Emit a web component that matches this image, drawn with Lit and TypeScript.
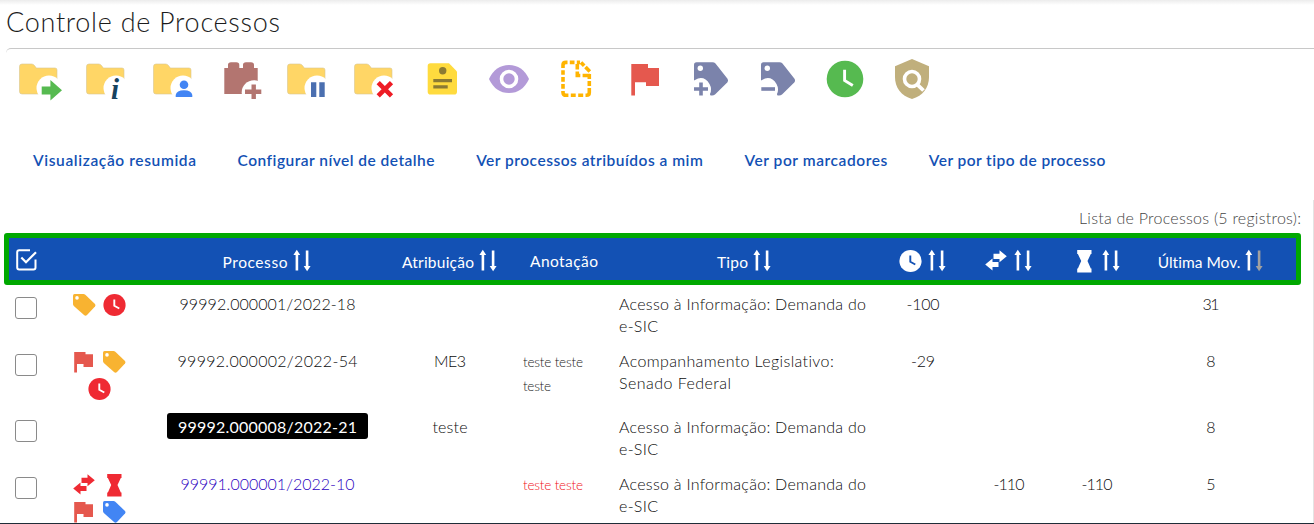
import { LitElement, html, svg, css, nothing } from "lit";
import { customElement } from "lit/decorators.js";
import { styleMap } from "lit/directives/style-map.js";

const FAMILY = '"Lato", "Liberation Sans", sans-serif';
const pen = document.createElement("canvas").getContext("2d")!;

/* Text run tracked so that it occupies the given width. */
const run = (text: string, width: number, size = 16, weight = 300) => {
  pen.font = `${weight} ${size}px ${FAMILY}`;
  const ls = (width - pen.measureText(text).width) / Math.max(1, text.length - 1);
  return html`<span
    class="run"
    style=${styleMap({
      fontSize: `${size}px`,
      fontWeight: `${weight}`,
      letterSpacing: `${ls.toFixed(3)}px`,
      marginRight: `${(-ls).toFixed(3)}px`,
    })}
    >${text}</span
  >`;
};

const folder = svg`
  <path d="M4 9H13.5Q15.5 9 16.5 10.5L18.3 13H37Q39 13 39 15V37Q39 39 37 39H4Q1.5 39 1.5 36.500V11.500Q1.500 9 4 9Z"
    fill="#ffd666" stroke="#d8c690" stroke-width=".6"/>
  <circle cx="31" cy="33" r="12.500" fill="#fff"/>`;
const tagCut = svg`
  <path d="M8.500 7.200H24.500Q26.300 7.200 27.500 8.500L39.500 23.800Q40.700 25.600 39.500 27.200L27 39.500Q25 41 22.200 40.200L22 39Q24.300 34 21.500 29Q17 21.500 10 23.500L6 25.500V10Q6 7.200 8.500 7.200Z" fill="#7b83ab"/>
  <circle cx="12.300" cy="13.300" r="2.700" fill="#fff"/>`;

const tools = [
  svg`${folder}<path d="M23.700 31.600H32.400V25L44 35.300L32.400 45.500V39.600H23.700Z" fill="#56ba50"/>`,
  svg`${folder}<text x="26" y="44" class="info">i</text>`,
  svg`${folder}<circle cx="32" cy="29.700" r="4.300" fill="#4285f4"/><path d="M23.700 42V40Q24.500 35.500 32 35.300Q39.500 35.500 40.300 40V42Z" fill="#4285f4"/>`,
  svg`<path d="M5.300 13H9V10Q9 7.300 12 7.300H17.300Q20.300 7.300 20.300 10V13H24V10Q24 7.300 27 7.300H32Q35 7.300 35 10V13H38.700V39H5.300Z" fill="#b37570"/>
    <circle cx="35" cy="37.500" r="12.300" fill="#fff"/><path d="M26 36.800H42.300M34.700 29.500V44" stroke="#b37570" stroke-width="4.400"/>`,
  svg`${folder}<path d="M25 27.300H30.300V42H25ZM33.300 27.300H38.700V42H33.300Z" fill="#4b6fb0"/>`,
  svg`${folder}<path d="M25.200 27.600L38.500 40.800M38.500 27.600L25.200 40.800" stroke="#ee1c25" stroke-width="4.600"/>`,
  svg`<path d="M10.500 8.300H29L37 16.500V36.700Q37 39.500 34.200 39.500H10.500Q7.700 39.500 7.700 36.700V11Q7.700 8.300 10.500 8.300Z" fill="#ffdb3e"/>
    <circle cx="22.700" cy="15.700" r="3.700" fill="#8b7a33"/><path d="M13.300 25.600H32M13.300 31.800H27.700" stroke="#8b7a33" stroke-width="3.300"/>`,
  svg`<path d="M2 24Q8.500 10 22 10T42 24Q35.500 38 22 38T2 24Z" fill="#b39ad8"/><circle cx="22" cy="24" r="7.500" fill="none" stroke="#fff" stroke-width="3.600"/>`,
  svg`<g fill="none" stroke="#ffb400" stroke-width="3.600">
    <path d="M9 13V10Q9 7.400 12 7.400H13.500M15.800 7.400H20.500M22.800 7.400H26M27 7.500L30.200 10.800M31.500 12L35.800 16.500M35.300 19V24M35.300 26V31M35.300 33V37.500Q35.300 40.300 32.500 40.300H31.500M29.200 40.300H24.200M21.700 40.300H16.800M14.400 40.300H12Q9 40.300 9 37.500V36M9 33.700V29M9 26.700V22M9 19.700V15.300"/>
    <path d="M23.300 9V14.500M23.300 16.500V20.500H26.300M28.600 20.500H36"/></g>`,
  svg`<path d="M10.300 9H27V13H38V31H25V27.300H14V40.500H10.300Z" fill="#e5584e"/>`,
  svg`${tagCut}<path d="M6 34H20M13 27.500V40.600" stroke="#7b83ab" stroke-width="3.600"/>`,
  svg`${tagCut}<path d="M6.300 34H20" stroke="#7b83ab" stroke-width="3.600"/>`,
  svg`<circle cx="23" cy="24" r="18.300" fill="#56ba50"/><path d="M22.600 14.800V25.500L30.800 30.500" fill="none" stroke="#fff" stroke-width="2.900"/>`,
  svg`<path d="M23 4L40 11.300V22C40 32.500 34 41 23 44C12 41 6 32.500 6 22V11.300Z" fill="#c0af7c"/>
    <circle cx="23" cy="24" r="7.500" fill="none" stroke="#fff" stroke-width="3.600"/><path d="M27.500 28.800L34.500 35.500" stroke="#fff" stroke-width="3.800"/>`,
];

const glyphs: Record<string, unknown> = {
  tag: svg`<path d="M2.500 1H11.500Q12.500 1 13.300 1.700L23 11Q24 12.300 23 13.500L15 22Q13.500 23.300 12 22L1.800 13Q1 12.200 1 11V2.500Q1 1 2.500 1Z" fill="currentColor"/><circle cx="5" cy="4.900" r="1.800" fill="#fff"/>`,
  clock: svg`<circle cx="12.500" cy="12" r="11.100" fill="currentColor"/><path class="hand" d="M12.300 6.500V12.800L17.300 15.500" fill="none" stroke-width="1.900"/>`,
  flag: svg`<path d="M2.200 2H13.500V4.200H21V17H11.500V14H5V22.500H2.200Z" fill="currentColor"/>`,
  swap: svg`<path d="M9.500 4.700H15.500V1.300L22.800 7.300L15.500 13.300V10H9.500ZM14.500 13H8.500V9.500L1.200 15.500L8.500 21.500V18H14.500Z" fill="currentColor"/>`,
  hour: svg`<path d="M5.200 1H19.500V5H18.800L15.500 12L18.800 19.500H19.500V23.500H5.200V19.500H5.900L9.200 12L5.900 5H5.200Z" fill="currentColor"/>`,
};
const glyph = (name: string, tone = "") =>
  html`<svg class="glyph ${tone}" viewBox="0 0 24 24">${glyphs[name]}</svg>`;

const sort = (dim = false) => html`<svg class="sort" viewBox="0 0 18 24">
  <path d="M3.800 0.800L7.200 6H5.200V21.500H2.600V6H0.400Z" fill="#fff"/>
  <path d="M12.800 1.500H15.400V17H17.600L14.100 22.300L10.700 17H12.800Z" fill=${dim ? "#a0a0a0" : "#fff"}/>
</svg>`;

const links: [string, number][] = [
  ["Visualização resumida", 163],
  ["Configurar nível de detalhe", 197],
  ["Ver processos atribuídos a mim", 227],
  ["Ver por marcadores", 143.5],
  ["Ver por tipo de processo", 177.5],
];

interface Row {
  icons: [string, string][];
  proc: [string, number];
  state?: string;
  who?: [string, number];
  notes?: [string, number][];
  noteTone?: string;
  type: [string, number][];
  days: ([string, number] | null)[];
}

const esic: [string, number][] = [["Acesso à Informação: Demanda do", 247], ["e-SIC", 39]];
const rows: Row[] = [
  {
    icons: [["tag", "amber"], ["clock", "red"]],
    proc: ["99992.000001/2022-18", 176],
    type: esic,
    days: [["-100", 33], null, null, ["31", 17]],
  },
  {
    icons: [["flag", "coral"], ["tag", "amber"], ["clock", "red"]],
    proc: ["99992.000002/2022-54", 180],
    who: ["ME3", 32],
    notes: [["teste teste", 60], ["teste", 28]],
    type: [["Acompanhamento Legislativo:", 215], ["Senado Federal", 112]],
    days: [["-29", 24], null, null, ["8", 8]],
  },
  {
    icons: [],
    proc: ["99992.000008/2022-21", 179],
    state: "current",
    who: ["teste", 35],
    type: esic,
    days: [null, null, null, ["8", 8]],
  },
  {
    icons: [["swap", "red"], ["hour", "red"], ["flag", "coral"], ["tag", "blue"]],
    proc: ["99991.000001/2022-10", 174],
    state: "visited",
    notes: [["teste teste", 60]],
    noteTone: "alert",
    type: esic,
    days: [null, ["-110", 31], ["-110", 31], ["5", 8]],
  },
];

@customElement("app-root")
export class AppRoot extends LitElement {
  static styles = css`
    :host { display: block; height: 524px; overflow: hidden; background: #fff; color: #0c0c0c;
      font-family: "Lato", "Liberation Sans", sans-serif; font-weight: 300; }
    * { box-sizing: border-box; }
    .page { height: 524px; overflow: hidden; display: flex; flex-direction: column; border-bottom: 1px solid #1f2d38; }
    .run { white-space: nowrap; display: inline-block; line-height: inherit; }
    .title { height: 48px; padding: 3px 0 0 6px; margin: 0; line-height: 34px; color: #1c1c1c;
      background: linear-gradient(#ececec, #fff 5px); flex: none; }
    .tools { height: 55px; margin-left: 6px; padding: 6px 0 0 12px; border-top: 1px solid #c8c8c8;
      border-top-left-radius: 5px; display: flex; gap: 19px; flex: none; }
    .tools svg { width: 48px; height: 48px; flex: none; overflow: visible; }
    .info { font: italic bold 29px "Liberation Serif", serif; fill: #17425f; }
    .links { display: flex; gap: 41.600px; padding-left: 33px; margin-top: 46px; height: 22px; line-height: 22px; color: #1351b4; flex: none; }
    .list { flex: 1; min-height: 0; margin-top: 29px; border-right: 1px solid #e4e4e4; padding: 7px 0 0 4px; }
    .caption { text-align: right; width: 1297px; height: 26px; line-height: 22px; color: #444; }
    .head { width: 1297px; height: 52px; border: 5px solid #00a800; border-radius: 3px; background: #1351b4; color: #fff; align-items: center; }
    .grid { display: grid; grid-template-columns: 46px 88px 248px 118px 110px 251px 106px 66px 110px 118px 26px; }
    .row { min-height: 57px; padding-bottom: 13px; margin-left: 5px; line-height: 22px; }
    .body { padding-top: 9px; }
    .mid { display: flex; justify-content: center; }
    .row .mid, .type { margin-top: -1px; }
    .head .mid { height: 42px; align-items: center; padding: 5px 1px 0 0; }
    .head .note { padding: 3px 0 0; }
    .all { width: 24px; height: 24px; margin: 2px 0 0 6px; display: block; }
    .sort { width: 18px; height: 24px; margin: 0 0 1px 5px; }
    .glyph { width: 24px; height: 24px; display: block; }
    .head .glyph { margin: 0 1px 2px -1px; }
    .hand { stroke: #fff; }
    .head .hand { stroke: #1351b4; }
    .box { width: 22px; height: 22px; border: 1px solid #8a8a8a; border-radius: 3px; margin: 3px 0 0 6px; }
    .icons { display: flex; flex-wrap: wrap; justify-content: center; gap: 3px 6px; padding: 0 15px 3px; margin-top: -1px; align-content: flex-start; width: 88px; }
    .amber { color: #f8b331; }
    .red { color: #ef2a33; }
    .coral { color: #e5584e; }
    .blue { color: #4285f4; }
    .proc { display: block; height: 22px; margin-left: 1px; }
    .current { height: 26px; background: #000; color: #fff; border-radius: 3px; padding: 3px 11px 0; margin: -3px 0 0 1px; }
    .visited { color: #2a00c0; }
    .notes { padding-left: 14px; line-height: 24px; margin-top: -1px; color: #222; }
    .notes div, .type div { display: flex; }
    .notes.alert { color: #f01020; }
  `;

  render() {
    return html`<div class="page">
      <h1 class="title">${run("Controle de Processos", 274, 27, 300)}</h1>
      <div class="tools">${tools.map((t) => html`<svg viewBox="0 0 48 48">${t}</svg>`)}</div>
      <nav class="links">${links.map(([t, w]) => run(t, w, 15.5, 600))}</nav>
      <section class="list">
        <div class="caption">${run("Lista de Processos (5 registros):", 222)}</div>
        <div class="head grid">
          <svg class="all" viewBox="0 0 24 24">
            <path d="M15 2.200H4.200Q2.200 2.200 2.200 4.200V19.500Q2.200 21.500 4.200 21.500H18.500Q20.500 21.500 20.500 19.500V11.500" fill="none" stroke="#fff" stroke-width="2"/>
            <path d="M6.300 9.500L11 14.200L21 4.200" fill="none" stroke="#fff" stroke-width="2.200"/>
          </svg>
          <span></span>
          <div class="mid">${run("Processo", 65, 15.5, 400)}${sort()}</div>
          <div class="mid">${run("Atribuição", 72, 15.5, 400)}${sort()}</div>
          <div class="mid note">${run("Anotação", 68, 15.5, 400)}</div>
          <div class="mid">${run("Tipo", 31, 15.5, 400)}${sort()}</div>
          <div class="mid">${glyph("clock")}${sort()}</div>
          <div class="mid">${glyph("swap")}${sort()}</div>
          <div class="mid">${glyph("hour")}${sort()}</div>
          <div class="mid">${run("Última Mov.", 83, 15.5, 400)}${sort(true)}</div>
        </div>
        <div class="body">
          ${rows.map(
            (r) => html`<div class="row grid">
              <div class="box"></div>
              <div class="icons">${r.icons.map(([n, c]) => glyph(n, c))}</div>
              <div class="mid"><div class="proc ${r.state ?? ""}">${run(...r.proc, 16, r.state === "current" ? 400 : 300)}</div></div>
              <div class="mid">${r.who ? run(...r.who) : nothing}</div>
              <div class="notes ${r.noteTone ?? ""}">${r.notes?.map(([t, w]) => html`<div>${run(t, w, 13.5)}</div>`)}</div>
              <div class="type">${r.type.map(([t, w]) => html`<div>${run(t, w)}</div>`)}</div>
              ${r.days.map((d) => html`<div class="mid">${d ? run(...d) : nothing}</div>`)}
            </div>`
          )}
        </div>
      </section>
    </div>`;
  }
}
